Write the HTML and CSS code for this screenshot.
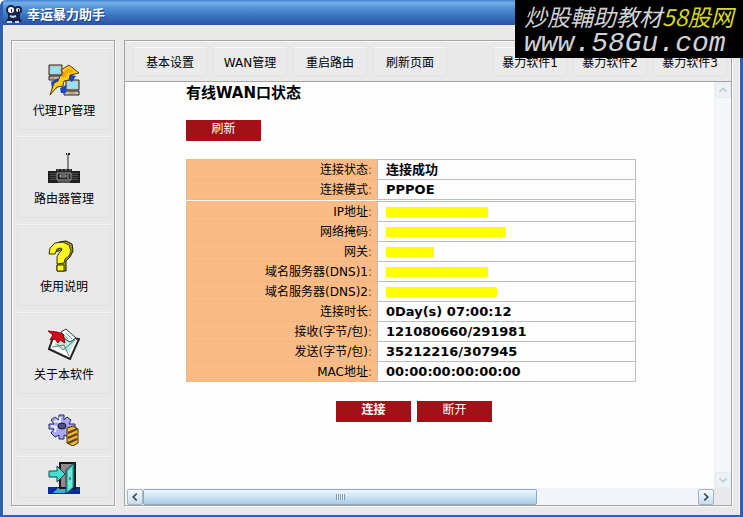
FILE: index.html
```
<!DOCTYPE html>
<html lang="zh-CN">

<head>
    <meta charset="UTF-8">
    <title>幸运暴力助手</title>
    <link rel="stylesheet" href="styles.css">
</head>

<body>
    <div class="window">
        <header class="titlebar">
            <svg class="app-icon" viewBox="0 0 18 20" aria-hidden="true">
                <path d="M3 9h12v5l2 4H1l2-4z" fill="#17234f" />
                <circle cx="6" cy="6" r="4" fill="#fff" stroke="#17234f" stroke-width="2" />
                <circle cx="13" cy="6" r="3" fill="#fff" stroke="#17234f" stroke-width="2" />
                <path d="M6 5h1v3H6zM13 5h1v3h-1z" fill="#17234f" />
                <path d="M5 12l3 1 3-1M2 18h5M10 18h4" fill="none" stroke="#c8d8f4" stroke-width="2" />
            </svg>
            <span>幸运暴力助手</span>
        </header>

        <div class="main">
            <nav class="sidebar">
                <button type="button" class="side-button">
                    <svg viewBox="0 0 32 32" aria-hidden="true">
                        <path d="M1 1h13v10H1zM1 12h15v4H1z" fill="#c4c4bc" stroke="#222" />
                        <path d="M3 3h9v6H3z" fill="#8fe4f8" />
                        <path d="M18 16h13v10H18zM16 27h15v4H16z" fill="#c4c4bc" stroke="#222" />
                        <path d="M20 18h9v6h-9z" fill="#8fe4f8" />
                        <path d="M3 18l7-4 3 5-5 6H4zM20 10l8 2-4 6-5-3zM12 24l6-3v8h-5z" fill="#1749ca" />
                        <path d="M13 6l8-5 10 8-9 2-1 5-5 1-1 5-6 1-7 8 4-12 4-2 2-5 4-2z" fill="#ffd21a" stroke="#5b3400" />
                        <path d="M17 6l5-2 4 4-6 1-2 4-5 1z" fill="#ffa40a" />
                        <path d="M2 14h5M21 29h6" stroke="#d37916" />
                    </svg>
                    <span>代理IP管理</span>
                </button>
                <button type="button" class="side-button">
                    <svg viewBox="0 0 32 32" aria-hidden="true">
                        <path d="M20 2v17" stroke="#222" />
                        <path d="M18 1h1v2h-1zM21 1h1v2h-1zM20 1h1v2h-1z" fill="#222" />
                        <path d="M8 17h16v2h8v12H0V19h8z" fill="#202020" />
                        <path d="M3 21v7M5 21v7M7 21v7M25 21v7M27 21v7M29 21v7" stroke="#777" stroke-dasharray="1 1" />
                        <path d="M9 21h14v7H9zM12 23h6v2h-6zM20 22v5" fill="none" stroke="#aaa" />
                        <path d="M9 18h2M13 18h2M17 18h2M21 18h2M10 30h12" stroke="#888" />
                    </svg>
                    <span>路由器管理</span>
                </button>
                <button type="button" class="side-button">
                    <svg viewBox="0 0 32 32" aria-hidden="true">
                        <path d="M11 2l7-1 6 3 1 7-3 6-4 4v10H9v-6l2-2v-4l2-4 4-4-2-3-4 3-7 1 3-7z" fill="#aaa200" stroke="#171700" />
                        <path d="M1 14l1-6 5-5 8-1 6 3 2 6-2 5-4 3-1 4-7 1v-7l2-4 3-3-1-2-4 1-2 5z" fill="#fff71c" stroke="#353500" />
                        <path d="M9 25h7v6H9z" fill="#fff71c" stroke="#353500" />
                        <path d="M5 8l4-3h6" fill="none" stroke="#fffdb6" />
                    </svg>
                    <span>使用说明</span>
                </button>
                <button type="button" class="side-button">
                    <svg viewBox="0 0 32 32" aria-hidden="true">
                        <path d="M6 7L31 11 22 31 1 21z" fill="#fff" stroke="#252525" stroke-width="2" />
                        <path d="M6 17l8-10 14 4-7 14-7-4z" fill="#b7eee0" />
                        <path d="M4 19l12-2 5 11M9 16l6 6 12-10" fill="none" stroke="#777" />
                        <path d="M13 4l5-3 10 9-6 4-5-3z" fill="#ecfff9" stroke="#333" />
                        <path d="M18 5l6 6M15 6l5 5" stroke="#54aa95" />
                        <path d="M0 3l9 1 6 2 2 9-5-3-2 3-3-4-5 1 3-5z" fill="#d80818" stroke="#880010" />
                    </svg>
                    <span>关于本软件</span>
                </button>
                <button type="button" class="side-button small" aria-label="设置">
                    <svg viewBox="0 0 32 32" aria-hidden="true">
                        <path d="M11 1h5v5l3-3 4 3-2 4h6v5l-5 1 3 4-4 3-5-2v4h-5v-4l-4 2-4-4 3-4H1v-5h5L3 6l4-3 4 3z" fill="#aaa8f2" stroke="#252565" />
                        <path d="M12 3v5L9 7 6 8M3 12l5 1-1 5" fill="none" stroke="#eeeeff" stroke-width="2" />
                        <ellipse cx="14" cy="12" rx="4" ry="3" fill="#50507f" stroke="#151530" />
                        <path d="M19 14l6-2 5 3v14l-5 3-6-3z" fill="#eab637" stroke="#4c2800" />
                        <path d="M20 19l9-4M20 24l9-4M20 29l9-4" stroke="#633d12" stroke-width="2" />
                    </svg>
                </button>
                <button type="button" class="side-button small" aria-label="退出">
                    <svg viewBox="0 0 32 32" aria-hidden="true">
                        <path d="M0 25h32v7H0z" fill="#092e9c" />
                        <path d="M10 26h12L17 31H5z" fill="#43a9dc" />
                        <path d="M12 1h15v25H12z" fill="#96868c" stroke="#17171b" stroke-width="2" />
                        <path d="M18 8l8-7v24l-8 7z" fill="#2fbdb0" stroke="#143c43" />
                        <path d="M20 9l4-4v20l-4 4z" fill="#78e5d6" />
                        <path d="M22 15v3" stroke="#163840" />
                        <path d="M1 9h8V4l8 8-8 8v-5H1z" fill="#42e0d2" stroke="#154449" />
                    </svg>
                </button>
            </nav>

            <section class="panel">
                <div class="toolbar">
                    <button type="button" class="tool-button">基本设置</button>
                    <button type="button" class="tool-button">WAN管理</button>
                    <button type="button" class="tool-button">重启路由</button>
                    <button type="button" class="tool-button">刷新页面</button>
                    <button type="button" class="tool-button extra">暴力软件1</button>
                    <button type="button" class="tool-button">暴力软件2</button>
                    <button type="button" class="tool-button">暴力软件3</button>
                </div>

                <div class="browser">
                    <div class="page">
                        <h1>有线WAN口状态</h1>
                        <button type="button" class="red-button">刷新</button>

                        <table class="status">
                            <tbody>
                                <tr><th scope="row">连接状态<i>:</i></th><td>连接成功</td></tr>
                                <tr><th scope="row">连接模式<i>:</i></th><td>PPPOE</td></tr>
                            </tbody>
                        </table>
                        <table class="status">
                            <tbody>
                                <tr><th scope="row">IP地址<i>:</i></th><td><span class="mask medium"></span></td></tr>
                                <tr><th scope="row">网络掩码<i>:</i></th><td><span class="mask long"></span></td></tr>
                                <tr><th scope="row">网关<i>:</i></th><td><span class="mask short"></span></td></tr>
                                <tr><th scope="row">域名服务器(DNS)1<i>:</i></th><td><span class="mask medium"></span></td></tr>
                                <tr><th scope="row">域名服务器(DNS)2<i>:</i></th><td><span class="mask wide"></span></td></tr>
                                <tr><th scope="row">连接时长<i>:</i></th><td>0Day(s) 07:00:12</td></tr>
                                <tr><th scope="row">接收(字节/包)<i>:</i></th><td>121080660/291981</td></tr>
                                <tr><th scope="row">发送(字节/包)<i>:</i></th><td>35212216/307945</td></tr>
                                <tr><th scope="row">MAC地址<i>:</i></th><td>00:00:00:00:00:00</td></tr>
                            </tbody>
                        </table>

                        <div class="actions">
                            <button type="button" class="red-button focused">连接</button>
                            <button type="button" class="red-button">断开</button>
                        </div>
                    </div>

                    <div class="scroll-v">
                        <button type="button" class="arrow" aria-label="向上" disabled>
                            <svg viewBox="0 0 16 16"><path d="M4 10l4-4 4 4" /></svg>
                        </button>
                        <button type="button" class="arrow" aria-label="向下" disabled>
                            <svg viewBox="0 0 16 16"><path d="M4 6l4 4 4-4" /></svg>
                        </button>
                    </div>

                    <div class="scroll-h">
                        <button type="button" class="arrow" aria-label="向左">
                            <svg viewBox="0 0 16 16"><path d="M10 4L6 8l4 4" /></svg>
                        </button>
                        <div class="track">
                            <div class="thumb"><span class="grip"></span></div>
                        </div>
                        <button type="button" class="arrow" aria-label="向右">
                            <svg viewBox="0 0 16 16"><path d="M6 4l4 4-4 4" /></svg>
                        </button>
                    </div>
                    <div class="corner"></div>
                </div>
            </section>
        </div>

        <div class="watermark">
            <p class="name">炒股輔助教材<b>58股网</b></p>
            <p class="site">www.58Gu.com</p>
        </div>
    </div>
</body>

</html>
```
FILE: styles.css
```
* {
    box-sizing: border-box;
}

body {
    margin: 0;
    font-family: "DejaVu Sans", "Noto Sans CJK SC", sans-serif;
    font-size: 12px;
    color: #000;
    background-color: #fff;
}

button {
    font: inherit;
    color: inherit;
    padding: 0;
    margin: 0;
}

svg {
    display: block;
}

.window {
    position: relative;
    display: flex;
    flex-direction: column;
    min-height: 100vh;
    border: 3px solid #2f5fb5;
    border-top: 0;
    border-radius: 6px 6px 0 0;
    background-color: #e9e9e9;
}

.titlebar {
    display: flex;
    align-items: center;
    gap: 4px;
    height: 25px;
    padding: 2px 2px 0;
    border-radius: 4px 4px 0 0;
    color: #fff;
    font-size: 13px;
    font-weight: bold;
    text-shadow: 1px 1px 0 #1c3c80;
    background: linear-gradient(#4384cf, #75afe8 12%, #5593d7 30%, #3971bd 65%, #2853a2);
}

.app-icon {
    width: 18px;
    height: 20px;
}

.main {
    flex: 1;
    display: flex;
    gap: 9px;
    padding: 15px 7px 9px;
    border: solid #f8f9ff;
    border-width: 0 1px;
}

/* left menu */
.sidebar {
    flex: none;
    display: flex;
    flex-direction: column;
    gap: 6px;
    width: 104px;
    padding: 7px 3px 7px 5px;
    border: 1px solid #a5a5a5;
    box-shadow: 1px 1px 0 #fafafa, inset 1px 1px 0 #fafafa;
}

.side-button {
    display: flex;
    flex-direction: column;
    align-items: center;
    gap: 6px;
    height: 82px;
    padding-top: 15px;
    border: 1px solid #e1e1e1;
    border-top-color: #f7f7f7;
    background-color: #e9e9e9;
    box-shadow: inset 0 1px 0 #dfdfdf;
    font-family: "Liberation Mono", "Noto Sans CJK SC", monospace;
    line-height: 20px;
}

.side-button svg {
    width: 32px;
    height: 32px;
}

.side-button.small {
    height: 42px;
    padding-top: 5px;
}

.side-button.small:nth-child(5) {
    margin-top: 8px;
}

/* right side */
.panel {
    flex: 1;
    display: flex;
    flex-direction: column;
    min-width: 0;
    border: 1px solid #a5a5a5;
    box-shadow: 1px 1px 0 #fafafa;
}

.toolbar {
    display: flex;
    gap: 6px;
    height: 41px;
    padding: 6px 4px 6px 8px;
    border-bottom: 1px solid #a5a5a5;
    box-shadow: inset 0 1px 0 #fafafa;
}

.tool-button {
    width: 74px;
    height: 29px;
    border: 1px solid #e1e1e1;
    border-top-color: #f7f7f7;
    background-color: #ebebeb;
    white-space: nowrap;
}

.tool-button.extra {
    margin-left: auto;
}

.browser {
    flex: 1;
    display: grid;
    grid-template-columns: minmax(0, 1fr) 17px;
    grid-template-rows: 1fr 17px;
    background-color: #fdfdfd;
}

.page {
    padding: 0 0 16px 61px;
}

h1 {
    margin: 0;
    font-size: 15px;
    line-height: 22px;
}

.red-button {
    display: block;
    width: 75px;
    height: 21px;
    padding-bottom: 3px;
    border: 0;
    color: #fff;
    background-color: #a01118;
    line-height: 18px;
}

.red-button.focused {
    font-weight: bold;
}

.page > .red-button {
    margin: 16px 0 18px;
}

/* status tables */
.status {
    width: 450px;
    border-collapse: collapse;
    table-layout: fixed;
}

.status + .status {
    margin-top: 1px;
}

.status th,
.status td {
    height: 20px;
    padding: 0 5px;
    border: 1px solid #b9bec2;
    line-height: 19px;
}

.status th {
    width: 191px;
    padding-top: 2px;
    border-color: #efb789;
    border-right-color: #b9bec2;
    background-color: #fbbb84;
    font-weight: normal;
    line-height: 17px;
    text-align: right;
}

.status i {
    color: #a04a1c;
    font-style: normal;
}

.status td {
    padding-left: 8px;
    font-size: 13px;
    font-weight: bold;
}

.mask {
    display: block;
    height: 10px;
    border-radius: 1px;
    background-color: #ff0;
}

.mask.short {
    width: 48px;
}

.mask.medium {
    width: 102px;
}

.mask.wide {
    width: 111px;
}

.mask.long {
    width: 120px;
}

.actions {
    display: flex;
    gap: 6px;
    margin: 19px 0 0 150px;
}

/* scrollbars */
.arrow {
    flex: none;
    width: 16px;
    height: 16px;
    border: 1px solid #a4b2c2;
    border-radius: 2px;
    background: linear-gradient(#f8fbff, #c9dcec);
}

.arrow svg {
    width: 14px;
    height: 14px;
    fill: none;
    stroke: #34495e;
    stroke-width: 2;
}

.arrow:disabled {
    border-color: #e3eaf2;
    background: #eef2f7;
}

.arrow:disabled svg {
    stroke: #bccada;
}

.scroll-v {
    display: flex;
    flex-direction: column;
    align-items: center;
    justify-content: space-between;
    background-color: #f6f7fb;
    border-left: 1px solid #eef0f4;
}

.scroll-h {
    display: flex;
    align-items: center;
    padding-left: 2px;
    background-color: #f1f5fb;
}

.track {
    flex: 1;
    height: 16px;
}

.thumb {
    display: flex;
    align-items: center;
    justify-content: center;
    width: 71%;
    height: 16px;
    border: 1px solid #8fa9c1;
    border-radius: 2px;
    background: linear-gradient(#edf7ff, #cce4f5 50%, #a9cbe4);
}

.grip {
    width: 9px;
    height: 6px;
    background: repeating-linear-gradient(to right, #7e9cb8 0 1px, #eaf5ff 1px 2px);
}

.corner {
    background-color: #e9e9ec;
}

/* banner over the top right corner */
.watermark {
    position: absolute;
    top: 0;
    right: -3px;
    width: 228px;
    height: 58px;
    padding: 2px 0 0 9px;
    color: #d2d2d2;
    background-color: #000;
    font-style: italic;
    white-space: nowrap;
}

.watermark p {
    margin: 0;
}

.watermark .name {
    font-family: "Noto Sans CJK TC", sans-serif;
    font-size: 23px;
    line-height: 28px;
}

.watermark b {
    color: #d8d820;
    font-weight: normal;
}

.watermark .site {
    font-family: "Liberation Mono", monospace;
    font-size: 28px;
    line-height: 28px;
}
```
